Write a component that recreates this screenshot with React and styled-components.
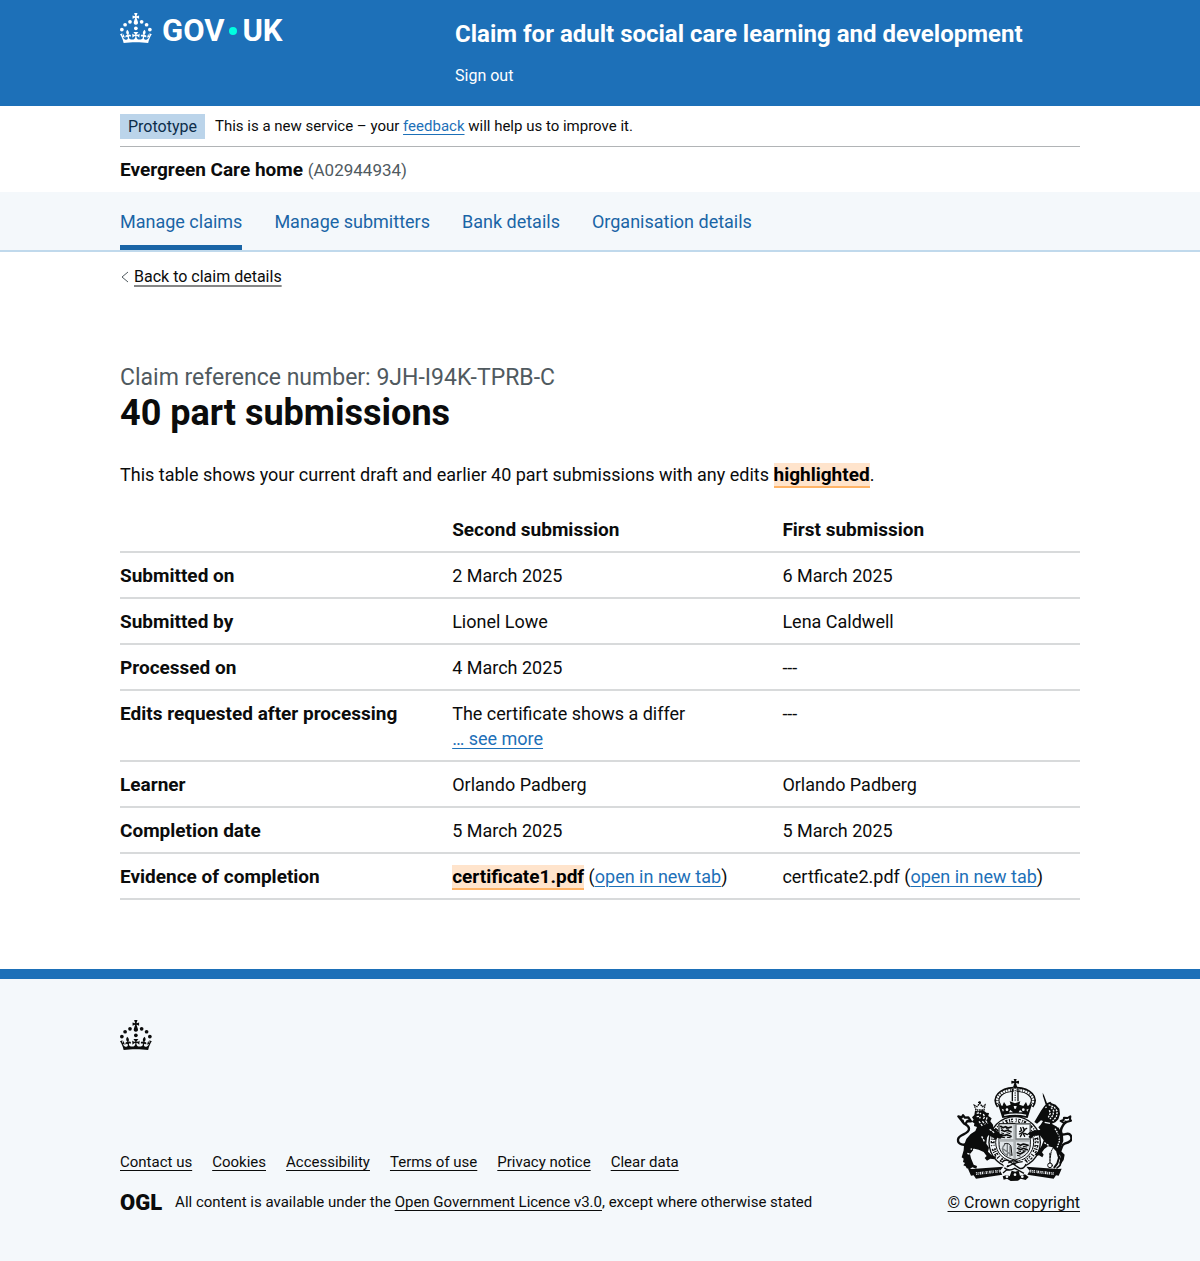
import React from "react";
import styled, { createGlobalStyle } from "styled-components";

const color = {
  brand: "#1d70b8",
  brandDark: "#1a65a6",
  tint: "#f4f8fb",
  text: "#0b0c0c",
  muted: "#505a5f",
  rule: "#d8dadb",
};

const GlobalStyle = createGlobalStyle`
  *, *::before, *::after { box-sizing: border-box; }
  body {
    margin: 0;
    background: #ffffff;
    color: ${color.text};
    font-family: Roboto, "Liberation Sans", sans-serif;
    font-size: 18px;
    line-height: 25px;
  }
`;

const Container = styled.div`
  max-width: 960px;
  margin: 0 auto;
`;

const Link = styled.a`
  color: ${(p) => (p.$dark ? color.text : color.brand)};
  text-decoration: underline;
  text-decoration-thickness: 1px;
  text-underline-offset: 3px;
`;

/* Header */
const Header = styled.header`
  background: ${color.brand};
  color: #ffffff;
`;

const HeaderGrid = styled(Container)`
  display: grid;
  grid-template-columns: 335px 1fr;
  padding: 13px 0 18px;
`;

const Logo = styled.a`
  display: flex;
  align-self: start;
  align-items: flex-start;
  gap: 10px;
  color: inherit;
  text-decoration: none;
`;

const Wordmark = styled.span`
  display: flex;
  align-items: center;
  gap: 5px;
  font-size: 31px;
  line-height: 36px;
  font-weight: 700;
`;

const Dot = styled.span`
  width: 8px;
  height: 8px;
  border-radius: 50%;
  background: #00ffe0;
`;

const ServiceName = styled.a`
  display: block;
  padding: 5px 0 12px;
  color: inherit;
  font-size: 24px;
  line-height: 32px;
  font-weight: 700;
  text-decoration: none;
`;

const SignOut = styled.a`
  color: inherit;
  font-size: 16px;
  text-decoration: none;
`;

/* Banner and organisation */
const PhaseBanner = styled.div`
  display: flex;
  align-items: center;
  gap: 10px;
  padding: 8px 0 7px;
  border-bottom: 1px solid #b1b4b6;
  font-size: 15px;
`;

const Tag = styled.strong`
  padding: 0 8px;
  background: #bbd4ea;
  color: #0c2d4a;
  font-size: 16px;
  font-weight: 400;
`;

const Organisation = styled.p`
  margin: 0;
  padding: 10px 0 9px;
  font-size: 19px;
  font-weight: 700;
`;

const OrgId = styled.span`
  color: ${color.muted};
  font-size: 17px;
  font-weight: 400;
`;

/* Service navigation */
const Nav = styled.nav`
  background: ${color.tint};
  border-bottom: 2px solid #c0d9ec;
`;

const NavList = styled.ul`
  display: flex;
  gap: 32px;
  max-width: 960px;
  margin: 0 auto;
  padding: 0;
  list-style: none;
`;

const NavLink = styled.a`
  display: block;
  padding: 17px 0 11px;
  border-bottom: 5px solid ${(p) => (p.$active ? color.brandDark : "transparent")};
  color: ${color.brandDark};
  text-decoration: none;
`;

/* Main */
const BackLink = styled.a`
  display: inline-flex;
  align-items: center;
  gap: 5px;
  margin-top: 12px;
  color: ${color.text};
  font-size: 16px;
  text-decoration: none;

  span {
    text-decoration: underline;
    text-decoration-color: #858686;
    text-decoration-thickness: 2px;
    text-underline-offset: 3px;
  }
`;

const Main = styled.main`
  padding: 74px 0 69px;
`;

const Caption = styled.span`
  display: block;
  color: ${color.muted};
  font-size: 23px;
  line-height: 30px;
  font-weight: 400;
`;

const Title = styled.h1`
  margin: 0 0 29px;
  font-size: 36px;
  line-height: 40px;
  font-weight: 700;
`;

const Intro = styled.p`
  margin: 0 0 20px;
`;

const Highlight = styled.strong`
  border-bottom: 2px solid #ffb366;
  background: #ffe4cc;
  color: #000000;
  font-size: 19px;
  font-weight: 700;
`;

const Table = styled.table`
  width: 100%;
  border-collapse: collapse;
  table-layout: fixed;
`;

const cell = `
  padding: 10px 20px 9px 0;
  border-bottom: 2px solid ${color.rule};
  text-align: left;
  vertical-align: top;
`;

const HeadCell = styled.th`
  ${cell}
  width: ${(p) => p.$width};
  font-size: 19px;
  font-weight: 700;
`;

const DataCell = styled.td`
  ${cell}
  padding-right: 0;
`;

/* Footer */
const Footer = styled.footer`
  border-top: 10px solid ${color.brand};
  background: ${color.tint};
  font-size: 16px;
`;

const FooterInner = styled(Container)`
  padding: 41px 0 47px;
`;

const FooterRow = styled.div`
  display: flex;
  align-items: flex-end;
  justify-content: space-between;
  margin-top: 22px;
`;

const FooterLinks = styled.ul`
  display: flex;
  flex-wrap: wrap;
  gap: 20px;
  margin: 0 0 15px;
  padding: 0;
  list-style: none;
  font-size: 15px;
`;

const Licence = styled.div`
  display: flex;
  align-items: center;
  gap: 13px;
`;

const OglMark = styled.span`
  font-size: 22px;
  line-height: 25px;
  font-weight: 900;
`;

const LicenceText = styled.span`
  font-size: 15px;
`;

const Copyright = styled.a`
  display: flex;
  flex-direction: column;
  align-items: center;
  gap: 9px;
  color: ${color.text};
  text-underline-offset: 3px;
`;

function Crown() {
  return (
    <svg width="32" height="30" viewBox="0 0 64 60" fill="currentColor" aria-hidden="true">
      <circle cx="20" cy="17.6" r="3.7" />
      <circle cx="10.2" cy="23.5" r="3.7" />
      <circle cx="3.7" cy="33.2" r="3.7" />
      <circle cx="31.7" cy="30.6" r="3.7" />
      <circle cx="43.3" cy="17.6" r="3.7" />
      <circle cx="53.2" cy="23.5" r="3.7" />
      <circle cx="59.7" cy="33.2" r="3.7" />
      <path d="M33.1,9.8c.2-.1.3-.3.5-.5l4.6,2.4v-6.8l-4.6,1.5c-.1-.2-.3-.3-.5-.5l1.9-5.9h-6.7l1.9,5.9c-.2.1-.3.3-.5.5l-4.6-1.5v6.8l4.6-2.4c.1.2.3.3.5.5l-2.6,8c-.9,2.8,1.2,5.7,4.1,5.7h0c3,0,5.1-2.9,4.1-5.7l-2.6-8ZM37,37.9s-3.4,3.8-4.1,6.1c2.2,0,4.2-.5,6.4-2.8l-.7,8.5c-2-2.8-4.4-4.1-5.7-3.8.1,3.1.5,6.7,5.8,7.2,3.7.3,6.7-1.5,7-3.8.4-2.6-2-4.3-3.7-1.6-1.4-4.5,2.4-6.1,4.9-3.2-1.9-4.5-1.8-7.7,2.4-10.9,3,4,2.6,7.3-1.2,11.1,2.4-1.3,6.2,0,4,4.6-1.2-2.8-3.7-2.2-4.2.2-.3,1.7.7,3.7,3,4.2,1.9.3,4.7-.9,7-5.9-1.3,0-2.4.7-3.9,1.7l2.4-8c.6,2.3,1.4,3.7,2.2,4.5.6-1.6.5-2.8,0-5.3l5,1.8c-2.6,3.6-5.2,8.7-7.3,17.5-7.4-1.1-15.7-1.7-24.5-1.7h0c-8.8,0-17.1.6-24.5,1.7-2.1-8.9-4.7-13.9-7.3-17.5l5-1.8c-.5,2.5-.6,3.7,0,5.3.8-.8,1.6-2.3,2.2-4.5l2.4,8c-1.5-1-2.6-1.7-3.9-1.7,2.3,5,5.2,6.2,7,5.9,2.3-.4,3.3-2.4,3-4.2-.5-2.4-3-3.1-4.2-.2-2.2-4.6,1.6-6,4-4.6-3.7-3.7-4.2-7.1-1.2-11.1,4.2,3.2,4.3,6.4,2.4,10.9,2.5-2.8,6.3-1.3,4.9,3.2-1.8-2.7-4.1-1-3.7,1.6.3,2.3,3.3,4.1,7,3.8,5.4-.5,5.7-4.2,5.8-7.2-1.3-.2-3.7,1-5.7,3.8l-.7-8.5c2.2,2.3,4.2,2.7,6.4,2.8-.7-2.3-4.1-6.1-4.1-6.1h10.6,0Z" />
    </svg>
  );
}

function RoyalArms() {
  const paper = color.tint;
  return (
    <svg width="116" height="102" viewBox="49 27 348 306" fill={color.text} stroke="none" aria-hidden="true">
      {/* crown */}
      <path d="M222 27h9l-2 7 9-2v9l-9-2 2 7h-9l2-7-9 2v-9l9 2z" />
      <circle cx="226.500" cy="50" r="6" />
      <g fill="none" stroke={color.text}>
        <path d="M178 108C160 82 184 60 222 58M275 108C293 82 269 60 231 58" strokeWidth="15" />
        <path d="M178 106C162 82 184 62 222 59M275 106C291 82 269 62 231 59" stroke={paper} strokeWidth="7" strokeDasharray="6 2" />
        <path d="M218 56L218 94M235 56L235 94" strokeWidth="4" />
        <path d="M226.500 60V94" strokeWidth="3" strokeDasharray="4 3" />
      </g>
      <path d="M174 100l14 8 5-12 8 12 12-4-3-10 16 6 16-6-3 10 12 4 8-12 5 12 14-8-14 44q-38-8-76 0z" />
      <g fill={paper}>
        <circle cx="202" cy="119" r="4" />
        <circle cx="251" cy="119" r="4" />
        <path d="M222 108h9l-2 8h-5zM186 116l7 3-3 6zM267 116l-7 3 3 6zM212 120l8 7h-12zM241 120l8 7h-12z" />
        <path d="M193 134q33-7 67 0l-1 4q-33-7-65 0z" />
      </g>
      {/* garter */}
      <circle cx="225" cy="217" r="79" />
      <circle cx="225" cy="217" r="75" fill={paper} />
      <g fill="none" stroke={color.text}>
        <circle cx="225" cy="217" r="66" strokeWidth="12" strokeDasharray="3 5 7 4 3 3 6 8" />
        <circle cx="225" cy="217" r="66" stroke={paper} strokeWidth="4" strokeDasharray="7 4 3 9" />
        <circle cx="225" cy="217" r="57" strokeWidth="3" />
      </g>
      {/* shield */}
      <path d="M178 161h94v62c0 25-18 39-47 47-29-8-47-22-47-47z" fill="#dfe4e7" stroke={color.text} strokeWidth="3" />
      <path d="M221 162h8v106h-8zM179 207h92v8h-92z" fill="#aeb3b5" />
      <path d="M229 162h42v45h-42z" fill={paper} stroke="#777c7e" strokeWidth="4" />
      <g fill="none" stroke={color.text} strokeWidth="6" strokeLinecap="round" strokeLinejoin="round">
        <path d="M183 169l7 4 8-3 7 4 10-3M186 181l8 3 9-3 11 4M183 194l10 3 8-3 13 5" strokeWidth="5" strokeDasharray="10 3" />
        <path d="M184 175l4 3M199 174l7 4M186 189l6 2M202 188l9 3M187 202l8 1M203 202l9 1" strokeWidth="3" />
        <path d="M234 222l9 4 8-4 14 4M234 235l9 4 8-4 12 4M233 248l9 4 12-7" strokeWidth="5" strokeDasharray="10 3" />
        <path d="M237 230l7 2M251 229l10 2M237 243l6 2M250 242l8 1M233 256l8 2" strokeWidth="3" />
        <path d="M250 172l5 9-6 6 6 12M249 187l-10 5M252 180l9-5M243 173l3 9-6 3M255 190l8 4M246 193l-4 7" strokeWidth="4" />
        <path d="M195 224c-10 9-8 25 6 31M203 222v35M211 228v30M188 235l27 20" stroke="#777c7e" strokeWidth="4" />
        <path d="M194 222c8-5 18 0 20 8l3 26" strokeWidth="3" />
      </g>
      {/* lion */}
      <g fill="none" stroke={color.text} strokeWidth="4">
        <path d="M109 120l-5-14 8 4 8-10 8 10 8-5-3 15z" strokeDasharray="5 2" />
        <path d="M120 94v8M115 97h9" />
      </g>
      <path d="M106 122l10 2 14-4 10 8 8 1-2 9 10 7-4 9 8 10 1 10 18 16 11 9-7 7-9-3-7 7-7-8-14-6-4 7-2 18 8 12-3 12 13 12 12 3-5 8-13-2-10 6-7-8 6-6-9-12-15-7-13-3-13 16 3 13 8 19 10 4-2 8-12-4-8 6-9-3-3-6-7-3 5-7-6-3 2-10-6-4 6-21 1-15 7-19 13-15 14-9 5-12-9-3 1-8-8-5 6-6-5-7 7-7z" />
      <g fill="none" stroke={color.text} strokeLinecap="round" strokeLinejoin="round">
        <path d="M86 218c-12 12-32 5-31-9 1-18 34-14 33-33-1-15-20-10-19-24" strokeWidth="7" />
        <path d="M69 155l-13-16 10 3 4-6 6 7 10-1 8 12-11-1-5 8" strokeWidth="7" />
      </g>
      <g fill="none" stroke={paper} strokeWidth="4">
        <path d="M111 130l8-2 5 4M111 140l8-1 3 6M131 132l4 9-5 7M142 142l-3 11 5 8M128 154l9 9M118 154l10 14M107 239l-14-2M126 199l8 15M83 250l8 3M150 178l16 12" strokeDasharray="7 3" />
      </g>
      {/* unicorn */}
      <path d="M309 68l4 8 10 26-5 2-8-25z" />
      <path d="M304 122l10-14 9-9 9-4 4 5 12 4 11 12 2 16-5 16-9 9-11 4 16 9 10 11 8 14 1 18-7 17-1 12 12 12-3 16-8 11-6-1 5-13-1-10-14-15-10-10-13-3-11 8-7 10 5 7-4 8-10-6-8 2-5-5 9-8 12-18 6-16-12-16-19 3-7 8-8-5 5-6-9-2 8-7 16-5 16-1-6-8 7-8 7-11-6-2-12 10-8-5z" />
      <g fill="none" stroke={paper} strokeWidth="4">
        <path d="M317 113l4-2M327 104l17 8 9 12-3 17-11 12M334 113l8 9-2 14-9 11M329 121l3 9-6 12M314 218l14 9" strokeDasharray="6 3" />
        <path d="M346 176l11 18 2 20-7 20" strokeDasharray="5 3" />
        <path d="M331 160l-16-3" />
      </g>
      <g fill="none" stroke={color.text} strokeLinecap="round" strokeLinejoin="round">
        <path d="M358 248c12-12 4-22 17-27 15-4 25-10 18-25-8-13-21 4-27-5-8-13 5-26 12-36" strokeWidth="7" />
        <path d="M375 160l-12-7 9-3 1-7 11 1 8-5-1 9 3 4-11 3z" strokeWidth="6" />
        <path d="M357 174v30l-8 16-14 23-3 19" strokeWidth="3" strokeDasharray="4 3" />
        <circle cx="331" cy="286" r="7" strokeWidth="3" />
        <path d="M331 250v28" strokeWidth="4" strokeDasharray="6 3" />
        <path d="M353 246l5 17-5 17-9 12" strokeWidth="6" />
        <path d="M358 260l7 12-4 14-9 8" strokeWidth="5" />
      </g>
      {/* buckle and flowers */}
      <path d="M188 276l19-7 18 12 21-12 17 9-12 20 8 20-16 13-19-4-20 5-18-13 11-19z" fill={paper} />
      <g fill="none" stroke={color.text} strokeWidth="4">
        <path d="M187 277q9-10 19-5l34 23q13 3 19-13M201 291q27-15 48-16M194 293q13 13 31 2l28 15M190 309l14-12M206 279l16-10 13 8" />
      </g>
      <circle cx="205" cy="288" r="3" />
      <circle cx="225" cy="282" r="3" />
      <path d="M189 319l13-4 8 4 6-17 11 3 10-3 4 15 15-4 11 8-9 9-15-4-8 6-22 1-11-7-10 3z" />
      <g fill={paper}>
        <circle cx="202" cy="320" r="4" />
        <circle cx="226" cy="314" r="4" />
        <circle cx="248" cy="320" r="4" />
      </g>
      {/* motto scroll */}
      <path d="M85 296l12 1 94-7-10 12 7 12-79 12-7-10-8 1zM366 296l-12 1-94-7 10 12-7 12 79 12 7-10 8 1z" />
      <g fill="none" stroke={paper} strokeWidth="8">
        <path d="M109 311l72-8" strokeDasharray="4 2 2 3 5 2 3 2 2 4" />
        <path d="M270 303l72 8" strokeDasharray="5 2 3 2 4 3 2 2" />
      </g>
      <g fill="none" stroke={color.text} strokeWidth="2">
        <path d="M109 311l72-8M270 303l72 8" strokeDasharray="3 4" />
      </g>
    </svg>
  );
}

const navItems = ["Manage claims", "Manage submitters", "Bank details", "Organisation details"];

const footerItems = ["Contact us", "Cookies", "Accessibility", "Terms of use", "Privacy notice", "Clear data"];

const rows = [
  ["Submitted on", "2 March 2025", "6 March 2025"],
  ["Submitted by", "Lionel Lowe", "Lena Caldwell"],
  ["Processed on", "4 March 2025", "---"],
  [
    "Edits requested after processing",
    <>
      The certificate shows a differ
      <br />
      <Link href="#more">… see more</Link>
    </>,
    "---",
  ],
  ["Learner", "Orlando Padberg", "Orlando Padberg"],
  ["Completion date", "5 March 2025", "5 March 2025"],
  [
    "Evidence of completion",
    <>
      <Highlight>certificate1.pdf</Highlight> (<Link href="#certificate1">open in new tab</Link>)
    </>,
    <>
      certficate2.pdf (<Link href="#certificate2">open in new tab</Link>)
    </>,
  ],
];

export default function App() {
  return (
    <>
      <GlobalStyle />
      <Header>
        <HeaderGrid>
          <Logo href="#home">
            <Crown />
            <Wordmark>
              <span>GOV</span>
              <Dot />
              <span>UK</span>
            </Wordmark>
          </Logo>
          <div>
            <ServiceName href="#service">Claim for adult social care learning and development</ServiceName>
            <SignOut href="#sign-out">Sign out</SignOut>
          </div>
        </HeaderGrid>
      </Header>

      <Container>
        <PhaseBanner>
          <Tag>Prototype</Tag>
          <span>
            This is a new service – your <Link href="#feedback">feedback</Link> will help us to improve it.
          </span>
        </PhaseBanner>
        <Organisation>
          Evergreen Care home <OrgId>(A02944934)</OrgId>
        </Organisation>
      </Container>

      <Nav aria-label="Service">
        <NavList>
          {navItems.map((label, i) => (
            <li key={label}>
              <NavLink href={`#nav-${i}`} $active={i === 0} aria-current={i === 0 ? "page" : undefined}>
                {label}
              </NavLink>
            </li>
          ))}
        </NavList>
      </Nav>

      <Container>
        <BackLink href="#back">
          <svg width="9" height="12" viewBox="0 0 9 12" fill="none" stroke={color.muted} aria-hidden="true">
            <path d="M8 1L2 6l6 5" />
          </svg>
          <span>Back to claim details</span>
        </BackLink>
        <Main>
          <Title>
            <Caption>Claim reference number: 9JH-I94K-TPRB-C</Caption>
            40 part submissions
          </Title>
          <Intro>
            This table shows your current draft and earlier 40 part submissions with any edits{" "}
            <Highlight>highlighted</Highlight>.
          </Intro>
          <Table>
            <thead>
              <tr>
                <HeadCell as="td" $width="34.6%" />
                <HeadCell scope="col" $width="34.4%">Second submission</HeadCell>
                <HeadCell scope="col" $width="31%">First submission</HeadCell>
              </tr>
            </thead>
            <tbody>
              {rows.map(([label, second, first]) => (
                <tr key={label}>
                  <HeadCell scope="row">{label}</HeadCell>
                  <DataCell>{second}</DataCell>
                  <DataCell>{first}</DataCell>
                </tr>
              ))}
            </tbody>
          </Table>
        </Main>
      </Container>

      <Footer>
        <FooterInner>
          <Crown />
          <FooterRow>
            <div>
              <FooterLinks>
                {footerItems.map((label, i) => (
                  <li key={label}>
                    <Link $dark href={`#footer-${i}`}>{label}</Link>
                  </li>
                ))}
              </FooterLinks>
              <Licence>
                <OglMark>OGL</OglMark>
                <LicenceText>
                  All content is available under the <Link $dark href="#licence">Open Government Licence v3.0</Link>,
                  except where otherwise stated
                </LicenceText>
              </Licence>
            </div>
            <Copyright href="#copyright">
              <RoyalArms />
              © Crown copyright
            </Copyright>
          </FooterRow>
        </FooterInner>
      </Footer>
    </>
  );
}
